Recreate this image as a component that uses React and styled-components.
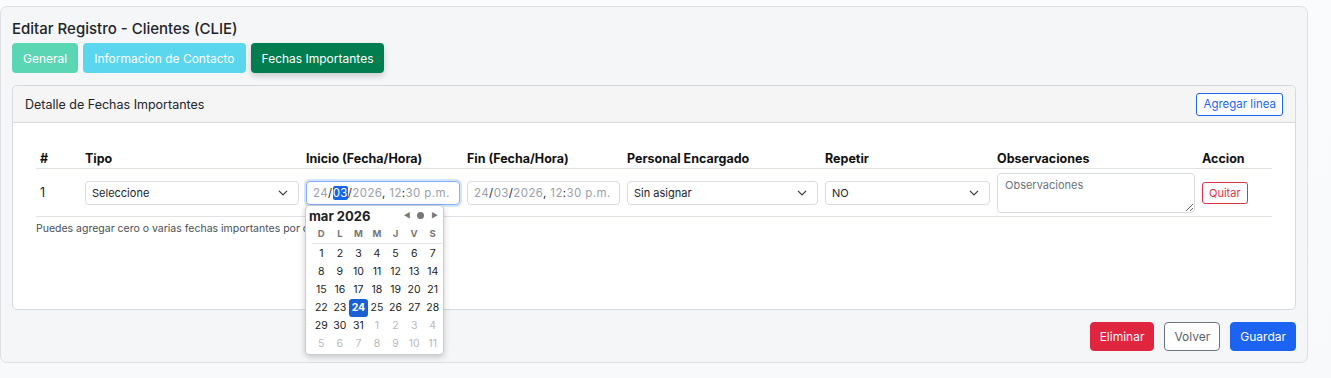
import React from 'react'
import styled, {createGlobalStyle} from 'styled-components'

const GlobalStyle = createGlobalStyle`
  html, body {
    margin: 0;
    padding: 0;
    background: #fafbfc;
    font-family: Inter, "Noto Sans", sans-serif;
    color: #212529;
  }
`

const columns = ['#', 'Tipo', 'Inicio (Fecha/Hora)', 'Fin (Fecha/Hora)', 'Personal Encargado', 'Repetir', 'Observaciones', 'Accion']

const weeks = [
  [1, 2, 3, 4, 5, 6, 7],
  [8, 9, 10, 11, 12, 13, 14],
  [15, 16, 17, 18, 19, 20, 21],
  [22, 23, 24, 25, 26, 27, 28],
  [29, 30, 31, -1, -2, -3, -4],
  [-5, -6, -7, -8, -9, -10, -11],
]

function Chevron() {
  return (
    <svg width="10" height="10" viewBox="0 0 16 16" fill="none" stroke="#343a40" strokeWidth="2" strokeLinecap="round" strokeLinejoin="round">
      <path d="M2 5l6 6 6-6" />
    </svg>
  )
}

function DateValue({active}) {
  return (
    <DateText>
      <Dim>24</Dim>/<Seg $active={active}>03</Seg>/<Dim>2026</Dim>, <Dim>12</Dim>:<Dim>30 p.m.</Dim>
    </DateText>
  )
}

function Calendar() {
  return (
    <Popup>
      <PopHead>
        <span>mar 2026</span>
        <Nav>
          <span>◀</span>
          <Dot />
          <span>▶</span>
        </Nav>
      </PopHead>
      <Days>
        {['D', 'L', 'M', 'M', 'J', 'V', 'S'].map((d, i) => <DayName key={i}>{d}</DayName>)}
      </Days>
      <Days>
        {weeks.flat().map((n, i) => (
          <Day key={i} $out={n < 0} $sel={n === 24}>{Math.abs(n)}</Day>
        ))}
      </Days>
    </Popup>
  )
}

export default function App() {
  return (
    <>
      <GlobalStyle />
      <Page>
        <Card>
          <Title>Editar Registro - Clientes (CLIE)</Title>
          <Tabs>
            <Tab $bg="#5bd6b4">General</Tab>
            <Tab $bg="#5ad6ef">Informacion de Contacto</Tab>
            <Tab $bg="#027d4f" $active>Fechas Importantes</Tab>
          </Tabs>

          <Panel>
            <PanelHead>
              <span>Detalle de Fechas Importantes</span>
              <SmallBtn>Agregar linea</SmallBtn>
            </PanelHead>
            <PanelBody>
              <Grid>
                {columns.map(c => <Th key={c}>{c}</Th>)}
              </Grid>
              <Grid $row>
                <Td>1</Td>
                <Td>
                  <Select>Seleccione<Chevron /></Select>
                </Td>
                <Td>
                  <Anchor>
                    <DateBox $focus><DateValue active /></DateBox>
                    <Calendar />
                  </Anchor>
                </Td>
                <Td>
                  <DateBox><DateValue /></DateBox>
                </Td>
                <Td>
                  <Select>Sin asignar<Chevron /></Select>
                </Td>
                <Td>
                  <Select>NO<Chevron /></Select>
                </Td>
                <Td>
                  <Notes placeholder="Observaciones" />
                </Td>
                <Td>
                  <QuitBtn>Quitar</QuitBtn>
                </Td>
              </Grid>
              <Help>Puedes agregar cero o varias fechas importantes por cliente.</Help>
            </PanelBody>
          </Panel>

          <Footer>
            <Btn $bg="#e0253f" $color="#fff">Eliminar</Btn>
            <Btn $bg="#fff" $color="#5c636a" $border="#6c757d">Volver</Btn>
            <Btn $bg="#1c63f2" $color="#fff">Guardar</Btn>
          </Footer>
        </Card>
      </Page>
    </>
  )
}

const Page = styled.div`
  padding: 6px 24px 16px 0;
  width: 1331px;
  box-sizing: border-box;
  background: linear-gradient(180deg, #fafbfc, #f7f9fb);
`

const Card = styled.div`
  width: 1308px;
  box-sizing: border-box;
  background: #f5f6f7;
  border: 1px solid #dcdfe3;
  border-radius: 7px;
  padding: 11px 11px 11px 11px;
`

const Title = styled.h1`
  margin: 1px 0 0;
  font-size: 15px;
  font-weight: 500;
  line-height: 20px;
  color: #212529;
`

const Tabs = styled.div`
  display: flex;
  gap: 5px;
  margin-top: 4px;
`

const Tab = styled.button`
  font-family: inherit;
  border: none;
  border-radius: 4px;
  height: 30px;
  padding: 0 11px;
  font-size: 12px;
  color: #fff;
  background: ${p => p.$bg};
  box-shadow: ${p => p.$active ? '0 3px 6px rgba(0,0,0,0.18)' : 'none'};
`

const Panel = styled.div`
  margin-top: 12px;
  border: 1px solid #d6d9dd;
  border-radius: 5px;
  background: #fff;
  overflow: visible;
`

const PanelHead = styled.div`
  display: flex;
  align-items: center;
  justify-content: space-between;
  height: 36px;
  padding: 0 12px;
  background: #f5f5f6;
  border-bottom: 1px solid #d6d9dd;
  border-radius: 5px 5px 0 0;
  font-size: 12.5px;
  color: #212529;
`

const SmallBtn = styled.button`
  font-family: inherit;
  font-size: 11.5px;
  color: #1d66ee;
  background: #fff;
  border: 1px solid #1d66ee;
  border-radius: 3px;
  height: 23px;
  padding: 0 6px;
`

const PanelBody = styled.div`
  height: 186px;
  box-sizing: border-box;
  padding: 25px 23px 0;
`

const Grid = styled.div`
  display: grid;
  grid-template-columns: 45px 221px 161px 160px 198px 172px 205px 72px;
  align-items: center;
  border-bottom: 1px solid #dee2e6;
  height: ${p => p.$row ? '47px' : '20px'};
`

const Th = styled.div`
  padding: 0 4px;
  font-size: 12.5px;
  font-weight: 700;
  color: #111;
  white-space: nowrap;
`

const Td = styled.div`
  padding: 0 3px 0 4px;
  font-size: 12.5px;
  color: #212529;
`

const Select = styled.div`
  display: flex;
  align-items: center;
  justify-content: space-between;
  height: 24px;
  box-sizing: border-box;
  border: 1px solid #d8dbdf;
  border-radius: 4px;
  padding: 0 10px 0 6px;
  font-size: 11px;
  background: #fff;
`

const Anchor = styled.div`
  position: relative;
`

const DateBox = styled.div`
  display: flex;
  align-items: center;
  height: 24px;
  box-sizing: border-box;
  border: 1px solid ${p => p.$focus ? '#86aef5' : '#d8dbdf'};
  box-shadow: ${p => p.$focus ? '0 0 0 2px rgba(13,110,253,0.18)' : 'none'};
  border-radius: 4px;
  padding: 0 6px;
  background: #fff;
`

const DateText = styled.span`
  font-size: 11.5px;
  letter-spacing: 0.4px;
  color: #212529;
  white-space: nowrap;
`

const Dim = styled.span`
  color: #9aa1a9;
`

const Seg = styled.span`
  color: ${p => p.$active ? '#fff' : '#9aa1a9'};
  background: ${p => p.$active ? '#1566e6' : 'transparent'};
  border-radius: 2px;
`

const Notes = styled.textarea`
  display: block;
  width: 100%;
  height: 40px;
  box-sizing: border-box;
  border: 1px solid #d8dbdf;
  border-radius: 4px;
  padding: 4px 7px;
  font-family: inherit;
  font-size: 11px;
  resize: vertical;
  &::placeholder {
    color: #6c737a;
  }
`

const QuitBtn = styled.button`
  font-family: inherit;
  font-size: 11px;
  color: #dc3545;
  background: #fff;
  border: 1px solid #dc3545;
  border-radius: 3px;
  height: 22px;
  padding: 0 6px;
`

const Help = styled.p`
  margin: 5px 0 0;
  font-size: 10.5px;
  color: #4a4f55;
`

const Popup = styled.div`
  position: absolute;
  top: 24px;
  left: -1px;
  width: 139px;
  box-sizing: border-box;
  background: #fff;
  border: 1px solid #c9ccd0;
  border-radius: 4px;
  box-shadow: 0 2px 6px rgba(0,0,0,0.2);
  padding: 1px 1px 1px 6px;
  z-index: 5;
`

const PopHead = styled.div`
  display: flex;
  align-items: center;
  justify-content: space-between;
  height: 18px;
  font-size: 13px;
  font-weight: 700;
  color: #222;
  margin-left: -3px;
`

const Nav = styled.div`
  display: flex;
  align-items: center;
  gap: 7px;
  font-size: 7px;
  color: #777;
  padding-right: 4px;
`

const Dot = styled.span`
  width: 7px;
  height: 7px;
  border-radius: 50%;
  background: #777;
`

const Days = styled.div`
  display: grid;
  grid-template-columns: repeat(7, 1fr);
  & + & {
    border-top: 1px solid #e3e3e3;
    padding-top: 1px;
  }
`

const DayName = styled.div`
  height: 18px;
  line-height: 18px;
  text-align: center;
  font-size: 9.5px;
  font-weight: 700;
  color: #777;
`

const Day = styled.div`
  height: 18px;
  line-height: 18px;
  text-align: center;
  font-size: 10.5px;
  font-weight: ${p => p.$sel ? 700 : 400};
  color: ${p => p.$sel ? '#fff' : p.$out ? '#b9b9b9' : '#222'};
  background: ${p => p.$sel ? '#1b5fd4' : 'transparent'};
  border-radius: 3px;
`

const Footer = styled.div`
  display: flex;
  justify-content: flex-end;
  gap: 10px;
  margin-top: 12px;
`

const Btn = styled.button`
  font-family: inherit;
  font-size: 12px;
  height: 29px;
  padding: 0 9px;
  border-radius: 4px;
  color: ${p => p.$color};
  background: ${p => p.$bg};
  border: 1px solid ${p => p.$border || p.$bg};
`
